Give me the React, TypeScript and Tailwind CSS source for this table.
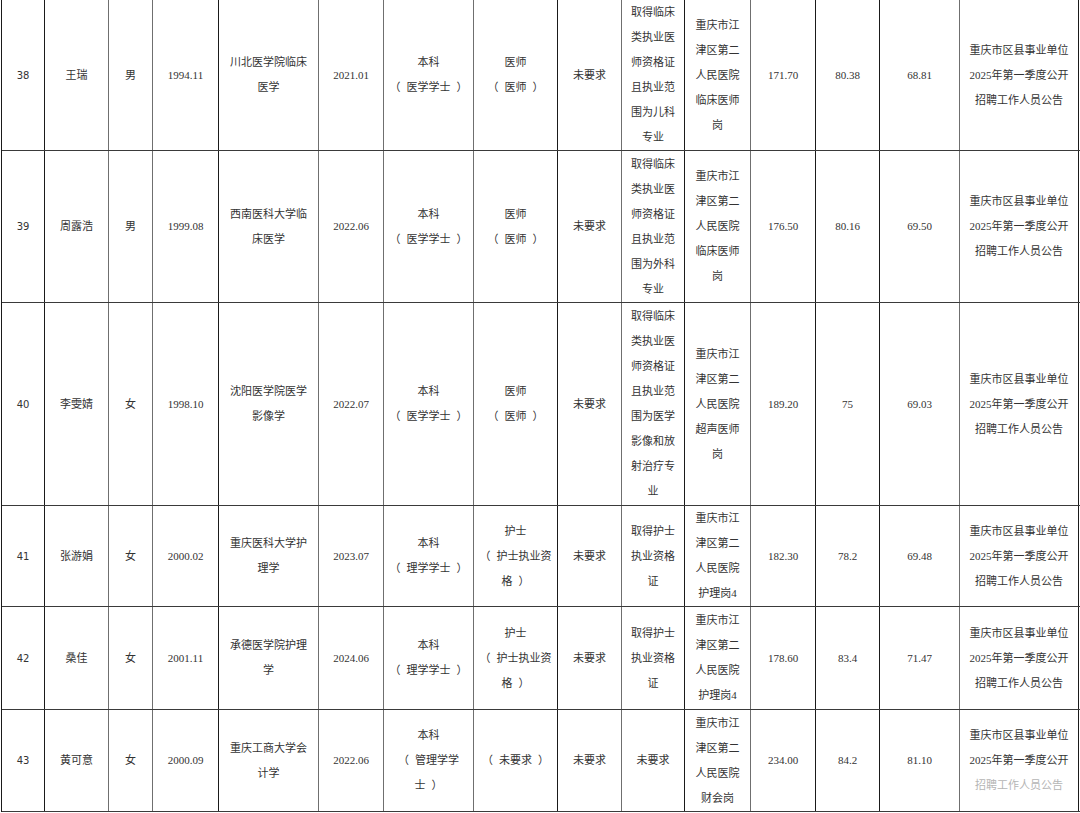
import type { ReactNode } from "react";

const cols = [
  { w: "w-[43px]", b: "border-[#1a1a1a]" },
  { w: "w-[64px]", b: "border-[#6f6f6f]" },
  { w: "w-[44px]", b: "border-[#6f6f6f]" },
  { w: "w-[66px]", b: "border-[#1a1a1a]" },
  { w: "w-[100px]", b: "border-[#6f6f6f]" },
  { w: "w-[65px]", b: "border-[#6f6f6f]" },
  { w: "w-[90px]", b: "border-[#6f6f6f]" },
  { w: "w-[84px]", b: "border-[#1a1a1a]" },
  { w: "w-[64px]", b: "border-[#6f6f6f]" },
  { w: "w-[63px]", b: "border-[#1a1a1a]" },
  { w: "w-[66px]", b: "border-[#6f6f6f]" },
  { w: "w-[65px]", b: "border-[#1a1a1a]" },
  { w: "w-[64px]", b: "border-[#1a1a1a]" },
  { w: "w-[80px]", b: "border-[#6f6f6f]" },
  { w: "w-[119px]", b: "border-[#1a1a1a]" },
];

const notice = "重庆市区县事业单位\n2025年第一季度公开\n招聘工作人员公告";

const rows = [
  {
    h: "h-[151px]",
    cells: ["38", "王瑞", "男", "1994.11", "川北医学院临床\n医学", "2021.01", "本科\n（医学学士）", "医师\n（医师）", "未要求",
      "取得临床\n类执业医\n师资格证\n且执业范\n围为儿科\n专业", "重庆市江\n津区第二\n人民医院\n临床医师\n岗", "171.70", "80.38", "68.81"],
  },
  {
    h: "h-[152px]",
    cells: ["39", "周露浩", "男", "1999.08", "西南医科大学临\n床医学", "2022.06", "本科\n（医学学士）", "医师\n（医师）", "未要求",
      "取得临床\n类执业医\n师资格证\n且执业范\n围为外科\n专业", "重庆市江\n津区第二\n人民医院\n临床医师\n岗", "176.50", "80.16", "69.50"],
  },
  {
    h: "h-[203px]",
    cells: ["40", "李雯婧", "女", "1998.10", "沈阳医学院医学\n影像学", "2022.07", "本科\n（医学学士）", "医师\n（医师）", "未要求",
      "取得临床\n类执业医\n师资格证\n且执业范\n围为医学\n影像和放\n射治疗专\n业", "重庆市江\n津区第二\n人民医院\n超声医师\n岗", "189.20", "75", "69.03"],
  },
  {
    h: "h-[101px]",
    cells: ["41", "张游娟", "女", "2000.02", "重庆医科大学护\n理学", "2023.07", "本科\n（理学学士）", "护士\n（护士执业资\n格）", "未要求",
      "取得护士\n执业资格\n证", "重庆市江\n津区第二\n人民医院\n护理岗4", "182.30", "78.2", "69.48"],
  },
  {
    h: "h-[103px]",
    cells: ["42", "桑佳", "女", "2001.11", "承德医学院护理\n学", "2024.06", "本科\n（理学学士）", "护士\n（护士执业资\n格）", "未要求",
      "取得护士\n执业资格\n证", "重庆市江\n津区第二\n人民医院\n护理岗4", "178.60", "83.4", "71.47"],
  },
  {
    h: "h-[102px]",
    cells: ["43", "黄可意", "女", "2000.09", "重庆工商大学会\n计学", "2022.06", "本科\n（管理学学\n士）", "（未要求）", "未要求",
      "未要求", "重庆市江\n津区第二\n人民医院\n财会岗", "234.00", "84.2", "81.10"],
    faded: true,
  },
];

// the source font sets its full-width brackets apart from the words
function withBrackets(text: string): ReactNode[] {
  return text.split(/([（）])/).map((part, i) => {
    if (part === "（") return <span key={i} className="mr-[6px]">{part}</span>;
    if (part === "）") return <span key={i} className="ml-[6px]">{part}</span>;
    return part;
  });
}

export default function App() {
  return (
    <div className="w-[1080px] h-[813px] overflow-hidden bg-white">
      <div className="ml-[1px] border-l border-[#1a1a1a] text-[#333] text-[11px] leading-[25px] font-['Liberation_Serif','Noto_Sans_CJK_SC',serif]">
        {rows.map((row, ri) => (
          <div key={ri} className={`flex ${row.h} border-b border-[#3a3a3a]`}>
            {row.cells.map((text, ci) => (
              <div
                key={ci}
                className={`${cols[ci].w} ${cols[ci].b} shrink-0 border-r flex items-center justify-center text-center`}
              >
                {ci === 0 ? (
                  <span className="text-[10px] font-['DejaVu_Sans',sans-serif]">{text}</span>
                ) : (
                  <p className="whitespace-pre">{withBrackets(text)}</p>
                )}
              </div>
            ))}
            <div className={`${cols[14].w} ${cols[14].b} shrink-0 border-r flex flex-col items-center justify-center text-center whitespace-pre`}>
              {notice.split("\n").map((line, li) => (
                <span key={li} className={row.faded && li === 2 ? "text-[#b5b5b5]" : ""}>
                  {line}
                </span>
              ))}
            </div>
          </div>
        ))}
      </div>
    </div>
  );
}
